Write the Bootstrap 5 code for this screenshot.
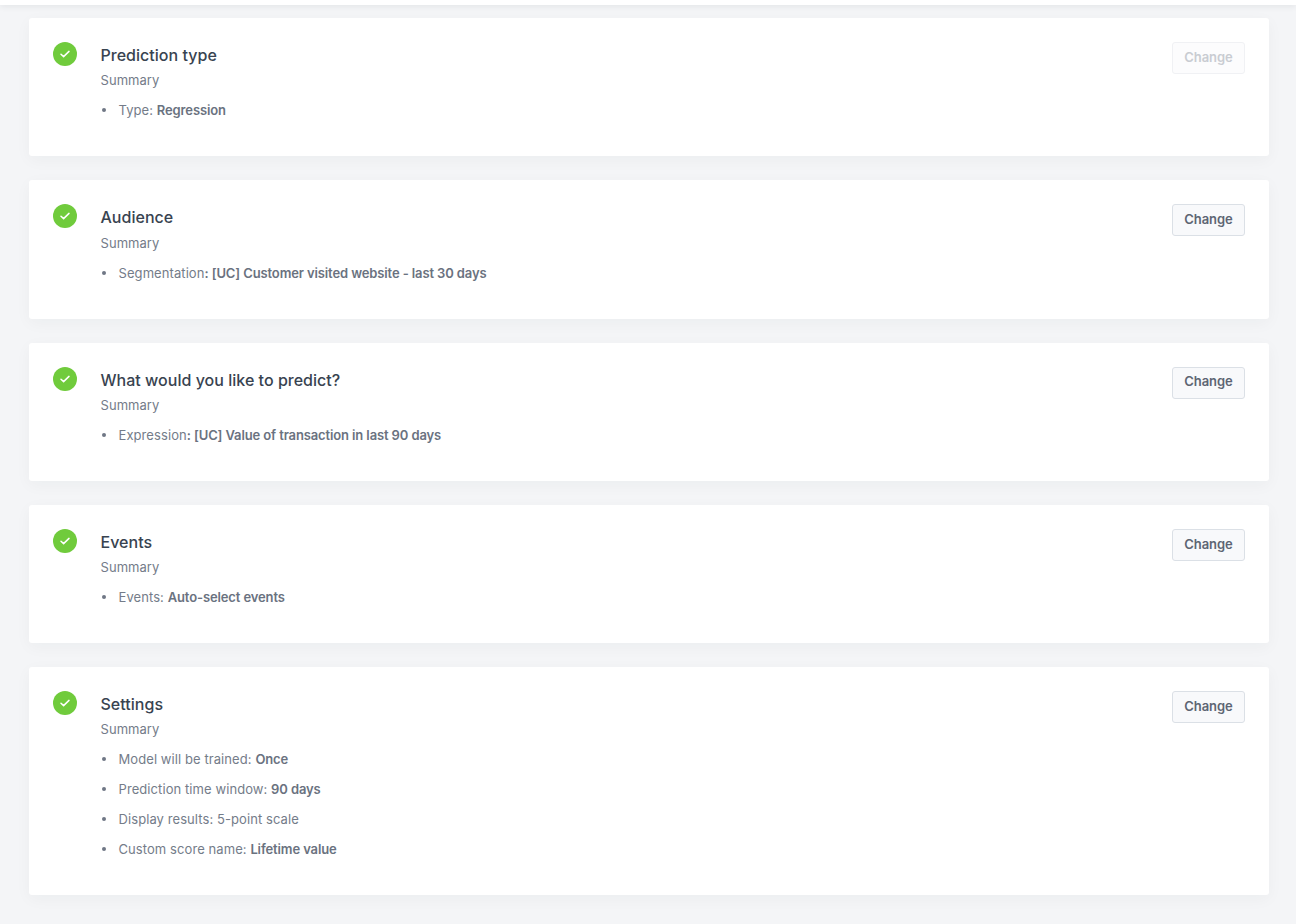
<!DOCTYPE html>
<html lang="en">
<head>
    <meta charset="UTF-8">
    <meta name="viewport" content="width=device-width, initial-scale=1.0">
    <title>Prediction summary</title>
    <link href="https://cdn.jsdelivr.net/npm/bootstrap@5.3.2/dist/css/bootstrap.min.css" rel="stylesheet">
    <style>
        body { background: #f4f5f7; font-family: Inter, "Noto Sans", sans-serif; height: 924px; overflow: hidden; }
        .top-strip { height: 5px; background: #fff; box-shadow: 0 1px 6px rgba(35, 45, 60, .1); }
        .step-list { padding: 13px 27px 0 29px; gap: 24px; }
        .step-card { background: #fff; border-radius: 3px; padding: 24px 24px 35.875px; box-shadow: 0 4px 16px rgba(35, 45, 60, .04); }
        .step-check { width: 24px; height: 24px; background: #70cb3c; margin-right: 23.5px; }
        .step-title { font-size: 16px; font-weight: 500; line-height: 26px; color: #384350; margin: 0; letter-spacing: .02px; }
        .step-sub { font-size: 13px; line-height: 20px; color: #747c89; margin: 2.375px 0 0; letter-spacing: .05px; }
        .step-items { list-style: none; margin: 0; padding: 0; }
        .step-items li { font-size: 13px; line-height: 20px; color: #747c89; margin-top: 10px; padding-left: 18px; position: relative; letter-spacing: .08px; }
        .step-items li::before { content: ""; position: absolute; left: 1px; top: 8px; width: 4px; height: 4px; border-radius: 50%; background: #6f7785; }
        .step-items b { font-weight: 600; color: #6a7280; letter-spacing: -.12px; }
        .change-btn { width: 73px; height: 32px; padding: 0 0 1px; font-size: 13px; font-weight: 600; letter-spacing: -.05px; color: #5d6573; background: #f8f9fb; border: 1px solid #dbe0e6; border-radius: 3px; }
        .change-btn:disabled { color: #c9ccd2; background: #fcfcfd; border-color: #f0f1f4; opacity: 1; }
    </style>
</head>
<body>

<div class="top-strip"></div>

<div class="step-list d-flex flex-column">
    <div class="step-card d-flex align-items-start">
        <span class="step-check rounded-circle d-flex align-items-center justify-content-center flex-shrink-0">
            <svg width="12" height="10" viewBox="0 0 12 10" fill="none" stroke="#fff" stroke-width="1.5" stroke-linecap="round" stroke-linejoin="round"><path d="M2 5.2 4.6 7.6 10 2.4"/></svg>
        </span>
        <div class="flex-grow-1">
            <h2 class="step-title">Prediction type</h2>
            <p class="step-sub">Summary</p>
            <ul class="step-items">
                <li>Type: <b>Regression</b></li>
            </ul>
        </div>
        <button class="btn change-btn flex-shrink-0" disabled>Change</button>
    </div>

    <div class="step-card d-flex align-items-start">
        <span class="step-check rounded-circle d-flex align-items-center justify-content-center flex-shrink-0">
            <svg width="12" height="10" viewBox="0 0 12 10" fill="none" stroke="#fff" stroke-width="1.5" stroke-linecap="round" stroke-linejoin="round"><path d="M2 5.2 4.6 7.6 10 2.4"/></svg>
        </span>
        <div class="flex-grow-1">
            <h2 class="step-title">Audience</h2>
            <p class="step-sub">Summary</p>
            <ul class="step-items">
                <li>Segmentation<b>: [UC] Customer visited website - last 30 days</b></li>
            </ul>
        </div>
        <button class="btn change-btn flex-shrink-0">Change</button>
    </div>

    <div class="step-card d-flex align-items-start">
        <span class="step-check rounded-circle d-flex align-items-center justify-content-center flex-shrink-0">
            <svg width="12" height="10" viewBox="0 0 12 10" fill="none" stroke="#fff" stroke-width="1.5" stroke-linecap="round" stroke-linejoin="round"><path d="M2 5.2 4.6 7.6 10 2.4"/></svg>
        </span>
        <div class="flex-grow-1">
            <h2 class="step-title">What would you like to predict?</h2>
            <p class="step-sub">Summary</p>
            <ul class="step-items">
                <li>Expression<b>: [UC] Value of transaction in last 90 days</b></li>
            </ul>
        </div>
        <button class="btn change-btn flex-shrink-0">Change</button>
    </div>

    <div class="step-card d-flex align-items-start">
        <span class="step-check rounded-circle d-flex align-items-center justify-content-center flex-shrink-0">
            <svg width="12" height="10" viewBox="0 0 12 10" fill="none" stroke="#fff" stroke-width="1.5" stroke-linecap="round" stroke-linejoin="round"><path d="M2 5.2 4.6 7.6 10 2.4"/></svg>
        </span>
        <div class="flex-grow-1">
            <h2 class="step-title">Events</h2>
            <p class="step-sub">Summary</p>
            <ul class="step-items">
                <li>Events: <b>Auto-select events</b></li>
            </ul>
        </div>
        <button class="btn change-btn flex-shrink-0">Change</button>
    </div>

    <div class="step-card d-flex align-items-start">
        <span class="step-check rounded-circle d-flex align-items-center justify-content-center flex-shrink-0">
            <svg width="12" height="10" viewBox="0 0 12 10" fill="none" stroke="#fff" stroke-width="1.5" stroke-linecap="round" stroke-linejoin="round"><path d="M2 5.2 4.6 7.6 10 2.4"/></svg>
        </span>
        <div class="flex-grow-1">
            <h2 class="step-title">Settings</h2>
            <p class="step-sub">Summary</p>
            <ul class="step-items">
                <li>Model will be trained: <b>Once</b></li>
                <li>Prediction time window: <b>90 days</b></li>
                <li>Display results: 5-point scale</li>
                <li>Custom score name: <b>Lifetime value</b></li>
            </ul>
        </div>
        <button class="btn change-btn flex-shrink-0">Change</button>
    </div>
</div>

<script src="https://cdn.jsdelivr.net/npm/bootstrap@5.3.2/dist/js/bootstrap.bundle.min.js"></script>
</body>
</html>
